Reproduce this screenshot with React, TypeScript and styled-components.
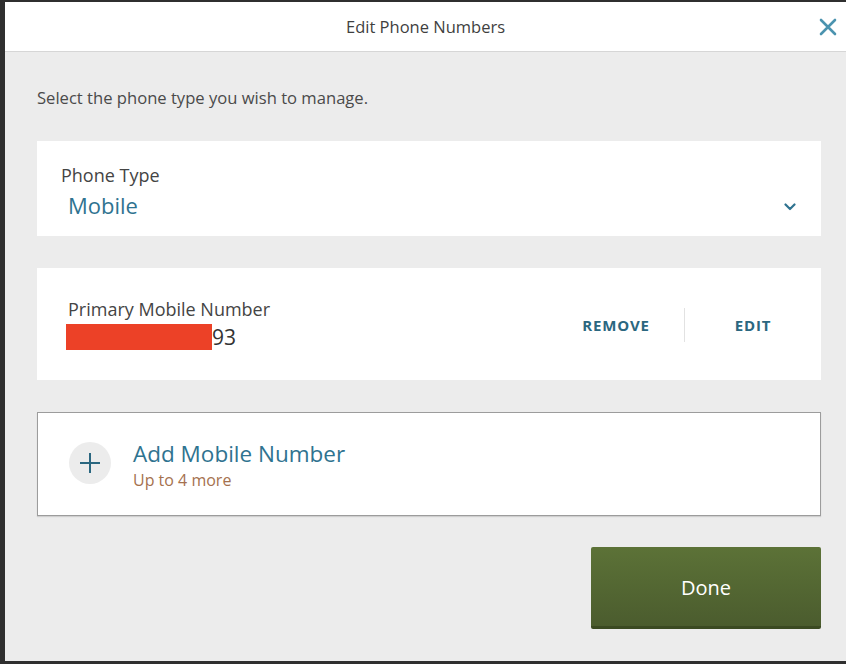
import React from "react";
import styled, { createGlobalStyle } from "styled-components";

const Global = createGlobalStyle`
  html, body { margin: 0; padding: 0; }
  body {
    background: #2f2f2f;
    font-family: "Open Sans", "Lato", sans-serif;
    width: 846px;
    height: 664px;
    overflow: hidden;
  }
`;

const Backdrop = styled.div`
  width: 846px;
  height: 664px;
  padding: 2px 0 0 5px;
  box-sizing: border-box;
  display: flex;
`;

const Modal = styled.div`
  width: 841px;
  height: 659px;
  background: #ececec;
  display: flex;
  flex-direction: column;
`;

const Header = styled.div`
  height: 49px;
  background: #fff;
  border-bottom: 1px solid #d6d6d6;
  display: flex;
  align-items: center;
  justify-content: center;
  position: relative;
`;

const Title = styled.h1`
  margin: 0;
  font-size: 16.5px;
  font-weight: 400;
  color: #3f3f3f;
`;

const Close = styled.button`
  position: absolute;
  right: 8px;
  top: 15px;
  width: 20px;
  height: 20px;
  border: 0;
  padding: 0;
  background: none;
  display: flex;
  align-items: center;
  justify-content: center;
`;

const Body = styled.div`
  flex: 1;
  padding: 35px 25px 0 32px;
  display: flex;
  flex-direction: column;
`;

const Intro = styled.p`
  margin: 0 0 32px;
  font-size: 16.6px;
  line-height: 22px;
  color: #4a4a4a;
`;

const Card = styled.div<{ $h: number; $outlined?: boolean }>`
  height: ${(p) => p.$h}px;
  box-sizing: border-box;
  background: #fff;
  border: ${(p) => (p.$outlined ? "1px solid #9c9c9c" : "none")};
  box-shadow: ${(p) => (p.$outlined ? "0 1px 1px rgba(0,0,0,0.12)" : "none")};
  margin-bottom: 32px;
  display: flex;
  align-items: center;
`;

const SelectBox = styled.div`
  flex: 1;
  display: flex;
  align-items: center;
  padding: 7px 24px 0 24px;
`;

const SelectText = styled.div`
  flex: 1;
  display: flex;
  flex-direction: column;
`;

const Chevron = styled.svg`
  margin-top: 30px;
  margin-right: 1px;
`;

const Label = styled.div`
  font-size: 18px;
  line-height: 22px;
  color: #444;
`;

const SelectValue = styled.div`
  font-size: 22px;
  line-height: 30px;
  color: #2f7390;
  padding-left: 7px;
  margin-top: 4px;
`;

const NumberBlock = styled.div`
  flex: 1;
  padding-left: 31px;
  display: flex;
  flex-direction: column;
`;

const NumberRow = styled.div`
  display: flex;
  align-items: center;
  margin-top: 4px;
  margin-left: -2px;
`;

const Redact = styled.span`
  width: 146px;
  height: 26px;
  background: #ec4127;
`;

const Digits = styled.span`
  font-size: 21px;
  color: #333;
  line-height: 26px;
`;

const Actions = styled.div`
  display: flex;
  align-items: center;
  align-self: stretch;
  padding-top: 2px;
`;

const ActionButton = styled.button`
  width: 136px;
  border: 0;
  background: none;
  font-family: inherit;
  font-size: 15px;
  font-weight: 700;
  letter-spacing: 0.8px;
  color: #2b6780;
  padding: 0;
`;

const Divider = styled.span`
  width: 1px;
  height: 34px;
  background: #e2e2e2;
`;

const AddRow = styled.div`
  display: flex;
  align-items: center;
  padding-left: 31px;
  gap: 22px;
`;

const PlusCircle = styled.span`
  width: 42px;
  height: 42px;
  border-radius: 50%;
  background: #ececec;
  display: flex;
  align-items: center;
  justify-content: center;
  margin-top: -3px;
`;

const AddText = styled.div`
  display: flex;
  flex-direction: column;
  margin-top: 0;
`;

const AddTitle = styled.div`
  font-size: 22.5px;
  line-height: 28px;
  color: #2f7390;
`;

const AddSub = styled.div`
  font-size: 16px;
  line-height: 18px;
  margin-top: 3px;
  color: #a5714e;
`;

const Footer = styled.div`
  display: flex;
  justify-content: flex-end;
  margin-top: -1px;
`;

const DoneButton = styled.button`
  width: 230px;
  height: 82px;
  border: 0;
  border-bottom: 3px solid #3b4a22;
  border-radius: 2px;
  background: linear-gradient(#5c7237, #4b5c2e);
  color: #fff;
  font-family: inherit;
  font-size: 20px;
  font-weight: 400;
  padding: 2px 0 0;
`;

export default function App() {
  return (
    <>
      <Global />
      <Backdrop>
        <Modal>
          <Header>
            <Title>Edit Phone Numbers</Title>
            <Close aria-label="Close">
              <svg width="18" height="18" viewBox="0 0 18 18">
                <path d="M2 2 L16 16 M16 2 L2 16" stroke="#4b93af" strokeWidth="2.6" strokeLinecap="round" />
              </svg>
            </Close>
          </Header>
          <Body>
            <Intro>Select the phone type you wish to manage.</Intro>
            <Card $h={95}>
              <SelectBox>
                <SelectText>
                  <Label>Phone Type</Label>
                  <SelectValue>Mobile</SelectValue>
                </SelectText>
                <Chevron width="12" height="8" viewBox="0 0 12 8">
                  <path d="M1.5 1.5 L6 6 L10.5 1.5" stroke="#2f7390" strokeWidth="2.2" fill="none" strokeLinecap="round" strokeLinejoin="round" />
                </Chevron>
              </SelectBox>
            </Card>
            <Card $h={112}>
              <NumberBlock>
                <Label>Primary Mobile Number</Label>
                <NumberRow>
                  <Redact />
                  <Digits>93</Digits>
                </NumberRow>
              </NumberBlock>
              <Actions>
                <ActionButton>REMOVE</ActionButton>
                <Divider />
                <ActionButton>EDIT</ActionButton>
              </Actions>
            </Card>
            <Card $h={104} $outlined>
              <AddRow>
                <PlusCircle>
                  <svg width="20" height="20" viewBox="0 0 20 20">
                    <path d="M10 0 V20 M0 10 H20" stroke="#2b6780" strokeWidth="2" />
                  </svg>
                </PlusCircle>
                <AddText>
                  <AddTitle>Add Mobile Number</AddTitle>
                  <AddSub>Up to 4 more</AddSub>
                </AddText>
              </AddRow>
            </Card>
            <Footer>
              <DoneButton>Done</DoneButton>
            </Footer>
          </Body>
        </Modal>
      </Backdrop>
    </>
  );
}
